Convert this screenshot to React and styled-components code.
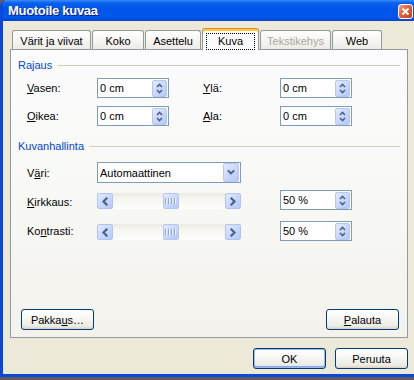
import React from 'react';
import styled, { createGlobalStyle, css } from 'styled-components';

const Global = createGlobalStyle`
  html, body { margin: 0; padding: 0; width: 414px; height: 380px; overflow: hidden; background: #5e5e5e; }
  body { font-family: "Liberation Sans", Arial, sans-serif; font-size: 11px; color: #000; }
  #root { width: 414px; height: 380px; }
  u { text-decoration: underline; text-underline-offset: 1px; }
`;

const Win = styled.div`
  width: 420px;
  height: 377px;
  box-sizing: border-box;
  border: 3px solid #0B47D8;
  border-top: none;
  border-top-left-radius: 7px;
  overflow: hidden;
  background: #ECE9D8;
  display: flex;
  flex-direction: column;
`;

const TitleBar = styled.div`
  height: 21px;
  flex: none;
  display: flex;
  align-items: flex-start;
  justify-content: space-between;
  padding: 0 4px 0 5px;
  background: linear-gradient(#3B8DF8 0%, #0A5FEE 14%, #0055E8 45%, #0058EE 80%, #0044D0 100%);
`;

const Title = styled.span`
  margin-top: 3px;
  color: #fff;
  font: bold 13px "Liberation Sans", Arial, sans-serif;
  letter-spacing: -0.3px;
  text-shadow: 1px 1px 0 #0A1A80;
`;

const CloseBtn = styled.div`
  margin-top: 4px;
  width: 15px;
  height: 15px;
  box-sizing: border-box;
  border: 1px solid #fff;
  border-radius: 3px;
  background: linear-gradient(135deg, #F0A48A 0%, #E2603A 45%, #C8401A 100%);
  display: flex;
  align-items: center;
  justify-content: center;
`;

const TabControl = styled.div`
  margin: 7px 0 0 7px;
  width: 398px;
  display: flex;
  flex-direction: column;
`;

const TabStrip = styled.div`
  height: 21px;
  display: flex;
  align-items: flex-end;
  gap: 1px;
  padding-left: 2px;
`;

const Tab = styled.div`
  position: relative;
  width: ${p => p.$w}px;
  height: 19px;
  box-sizing: border-box;
  border: 1px solid #919B9C;
  border-bottom: none;
  border-radius: 3px 3px 0 0;
  background: linear-gradient(#FFFFFF 0%, #F7F6F3 50%, #ECEBE6 100%);
  color: ${p => (p.$disabled ? '#ACA899' : '#000')};
  display: flex;
  align-items: center;
  justify-content: center;
  padding-top: 1px;
  ${p =>
    p.$active &&
    css`
      height: 22px;
      margin-bottom: -1px;
      z-index: 1;
      border-top: 1px solid #E68B2C;
      background: #FCFCFE;
      box-shadow: inset 0 2px 0 #FFC73C;
      padding-top: 3px;
    `}
`;

const Focus = styled.span`
  width: calc(100% - 6px);
  height: 17px;
  box-sizing: border-box;
  border: 1px dotted #000;
  display: flex;
  align-items: center;
  justify-content: center;
`;

const Panel = styled.div`
  height: 289px;
  box-sizing: border-box;
  border: 1px solid #919B9C;
  background: linear-gradient(#FCFCFE 0%, #F7F7F3 60%, #F3F2EC 100%);
  padding: 8px 7px 7px 7px;
  display: flex;
  flex-direction: column;
`;

const GroupHeader = styled.div`
  height: 14px;
  display: flex;
  align-items: center;
  gap: 5px;
  margin-top: ${p => p.$mt || 0}px;
  color: #0046D5;
`;

const Rule = styled.div`
  flex: 1;
  height: 1px;
  background: #D0D0BF;
`;

const Row = styled.div`
  display: grid;
  grid-template-columns: ${p => p.$cols};
  align-items: center;
  padding-left: 9px;
  height: ${p => p.$h || 20}px;
  margin-top: ${p => p.$mt || 0}px;
`;

const Label = styled.span`
  padding-top: ${p => p.$dy || 0}px;
  white-space: nowrap;
`;

const Field = styled.div`
  width: ${p => p.$w || 72}px;
  height: ${p => p.$h || 20}px;
  box-sizing: border-box;
  border: 1px solid #7F9DB9;
  background: #fff;
  display: flex;
  align-items: center;
  padding: 0 1px 0 2px;
`;

const Value = styled.span`
  flex: 1;
  white-space: nowrap;
`;

const blueButton = css`
  box-sizing: border-box;
  border: 1px solid #B4C6F2;
  border-radius: 2px;
  background: linear-gradient(135deg, #E3EBFE 0%, #C9D8FC 50%, #B5C9F7 100%);
  display: flex;
  align-items: center;
  justify-content: center;
  flex: none;
`;

const Spin = styled.span`
  ${blueButton}
  width: 15px;
  height: 17px;
`;

const DropButton = styled.span`
  ${blueButton}
  width: 16px;
  height: 19px;
`;

const ScrollBar = styled.div`
  width: 144px;
  height: 16px;
  align-self: start;
  margin-top: 3px;
  display: flex;
  background: linear-gradient(#EDEBE3 0%, #F7F6F1 40%, #FEFEFB 100%);
`;

const ScrollButton = styled.span`
  ${blueButton}
  width: 16px;
  height: 16px;
  border-color: #B0C4F3;
`;

const Track = styled.div`
  position: relative;
  flex: 1;
`;

const Thumb = styled.span`
  ${blueButton}
  position: absolute;
  top: 0;
  width: 16px;
  height: 16px;
  gap: 1px;
`;

const Grip = styled.span`
  width: 1px;
  height: 6px;
  background: #8DA5DC;
  box-shadow: 1px 0 0 #EEF3FE;
  margin-right: 1px;
`;

const Spacer = styled.div`
  flex: 1;
`;

const ButtonRow = styled.div`
  display: flex;
  justify-content: ${p => p.$justify || 'space-between'};
  gap: ${p => p.$gap || 0}px;
  padding: ${p => p.$pad || '0'};
  margin-top: ${p => p.$mt || 0}px;
`;

const Btn = styled.button`
  width: 73px;
  height: 21px;
  box-sizing: border-box;
  border: 1px solid #003C74;
  border-radius: 3px;
  padding: 0;
  background: linear-gradient(#FFFFFF 0%, #F7F7F3 45%, #ECEBE5 85%, #D8D2C6 100%);
  font: 11px "Liberation Sans", Arial, sans-serif;
  color: #000;
  ${p =>
    p.$default &&
    css`
      box-shadow: inset 0 0 0 1px #9DB8EC, inset 0 -1px 0 1px #8AA7E6;
    `}
`;

const ChevronSvg = ({ dir }) => {
  const paths = {
    down: 'M1.5 2 L4 4.5 L6.5 2',
    left: 'M5.5 1.5 L2.5 4.5 L5.5 7.5',
    right: 'M2.5 1.5 L5.5 4.5 L2.5 7.5',
  };
  const horiz = dir === 'left' || dir === 'right';
  return (
    <svg width={horiz ? 8 : 8} height={horiz ? 9 : 6.5} viewBox={horiz ? '0 0 8 9' : '0 0 8 6.5'}>
      <path d={paths[dir]} fill="none" stroke="#4D6185" strokeWidth={horiz ? 2.2 : 1.9} strokeLinecap="square" />
    </svg>
  );
};

const SpinArrows = () => (
  <svg width="9" height="13" viewBox="0 0 9 13">
    <path d="M2 5 L4.5 2.5 L7 5" fill="none" stroke="#4D6185" strokeWidth="1.6" />
    <path d="M2 8 L4.5 10.5 L7 8" fill="none" stroke="#4D6185" strokeWidth="1.6" />
  </svg>
);

const SpinField = ({ value }) => (
  <Field>
    <Value>{value}</Value>
    <Spin>
      <SpinArrows />
    </Spin>
  </Field>
);

const Slider = ({ value }) => (
  <ScrollBar>
    <ScrollButton>
      <ChevronSvg dir="left" />
    </ScrollButton>
    <Track>
      <Thumb style={{ left: `calc((100% - 16px) * ${value / 100})` }}>
        <Grip />
        <Grip />
        <Grip />
        <Grip />
      </Thumb>
    </Track>
    <ScrollButton>
      <ChevronSvg dir="right" />
    </ScrollButton>
  </ScrollBar>
);

const tabs = [
  { label: 'Värit ja viivat', w: 79 },
  { label: 'Koko', w: 52 },
  { label: 'Asettelu', w: 56 },
  { label: 'Kuva', w: 57, active: true },
  { label: 'Tekstikehys', w: 71, disabled: true },
  { label: 'Web', w: 50 },
];

const CROP_COLS = '70px 106px 77px 72px';
const IMAGE_COLS = '70px 183px 72px';

export default function App() {
  return (
    <>
      <Global />
      <Win>
        <TitleBar>
          <Title>Muotoile kuvaa</Title>
          <CloseBtn>
            <svg width="9" height="9" viewBox="0 0 9 9">
              <path d="M1.5 1.5 L7.5 7.5 M7.5 1.5 L1.5 7.5" stroke="#fff" strokeWidth="2" />
            </svg>
          </CloseBtn>
        </TitleBar>

        <TabControl>
          <TabStrip>
            {tabs.map(t => (
              <Tab key={t.label} $w={t.w} $active={t.active} $disabled={t.disabled}>
                {t.active ? <Focus>{t.label}</Focus> : t.label}
              </Tab>
            ))}
          </TabStrip>
          <Panel>
            <GroupHeader>
              <span>Rajaus</span>
              <Rule />
            </GroupHeader>
            <Row $cols={CROP_COLS} $mt={6}>
              <Label><u>V</u>asen:</Label>
              <SpinField value="0 cm" />
              <Label><u>Y</u>lä:</Label>
              <SpinField value="0 cm" />
            </Row>
            <Row $cols={CROP_COLS} $mt={8}>
              <Label><u>O</u>ikea:</Label>
              <SpinField value="0 cm" />
              <Label><u>A</u>la:</Label>
              <SpinField value="0 cm" />
            </Row>

            <GroupHeader $mt={13}>
              <span>Kuvanhallinta</span>
              <Rule />
            </GroupHeader>
            <Row $cols={IMAGE_COLS} $mt={9} $h={21}>
              <Label>V<u>ä</u>ri:</Label>
              <Field $w={144} $h={21}>
                <Value>Automaattinen</Value>
                <DropButton>
                  <ChevronSvg dir="down" />
                </DropButton>
              </Field>
            </Row>
            <Row $cols={IMAGE_COLS} $mt={7}>
              <Label $dy={4}><u>K</u>irkkaus:</Label>
              <Slider value={52} />
              <SpinField value="50 %" />
            </Row>
            <Row $cols={IMAGE_COLS} $mt={11}>
              <Label>Ko<u>n</u>trasti:</Label>
              <Slider value={52} />
              <SpinField value="50 %" />
            </Row>

            <Spacer />
            <ButtonRow $pad="0 1px 0 3px">
              <Btn>Pakka<u>u</u>s…</Btn>
              <Btn><u>P</u>alauta</Btn>
            </ButtonRow>
          </Panel>
        </TabControl>

        <ButtonRow $justify="flex-end" $gap={9} $pad="0 9px 0 0" $mt={10}>
          <Btn $default>OK</Btn>
          <Btn>Peruuta</Btn>
        </ButtonRow>
      </Win>
    </>
  );
}
